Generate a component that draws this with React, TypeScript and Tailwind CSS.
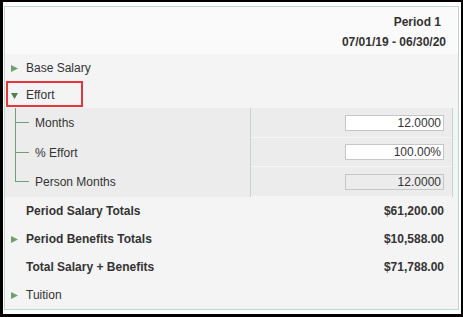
import { useState } from "react";

const font = { fontFamily: '"Liberation Sans", Arial, sans-serif' };

function Arrow({ open, dark }: { open?: boolean; dark?: boolean }) {
  const color = dark ? "#4f7f4f" : "#6f9f6f";
  return (
    <svg width="7" height="7" viewBox="0 0 7 7" className="mr-[8px] shrink-0">
      {open ? (
        <polygon points="0,1 7,1 3.5,7" fill={color} />
      ) : (
        <polygon points="0,0 7,3.5 0,7" fill={color} />
      )}
    </svg>
  );
}

interface SubRow {
  label: string;
  value: string;
  disabled?: boolean;
  h: string;
}

const subRows: SubRow[] = [
  { label: "Months", value: "12.0000", h: "h-[30px]" },
  { label: "% Effort", value: "100.00%", h: "h-[29px]" },
  { label: "Person Months", value: "12.0000", disabled: true, h: "h-[30px]" },
];

export default function App() {
  const [values, setValues] = useState(subRows.map((r) => r.value));

  return (
    <div
      className="w-[463px] h-[317px] bg-white border-black border-t-2 border-l-[3px] border-r-2 border-b-[3px] pt-[4px] pl-[1px] pr-[2px] pb-[4px] text-[12px] text-[#333]"
      style={font}
    >
      <div className="relative h-full border border-[#bcd8cf] bg-[#f4f4f4] flex flex-col">
        {/* header */}
        <div className="h-[47px] bg-[#fafafa] flex flex-col items-end pt-[5px] pr-[12px] font-bold leading-[20px]">
          <div className="mr-[5px]">Period 1</div>
          <div>07/01/19 - 06/30/20</div>
        </div>

        <div className="h-[28px] flex items-center pl-[6px]">
          <Arrow />
          <span>Base Salary</span>
        </div>
        <div className="h-[26px] flex items-center pl-[6px]">
          <Arrow open dark />
          <span>Effort</span>
        </div>

        {/* effort details */}
        <div className="flex bg-[#ececec] mr-[5px]">
          <div className="w-[245px] flex flex-col">
            {subRows.map((r, i) => (
              <div key={r.label} className={`relative ${r.h} flex items-center pl-[30px]`}>
                <span className="absolute left-[10px] top-0 h-1/2 w-[14px] border-l border-b border-[#6f9f6f]" />
                {i < subRows.length - 1 && (
                  <span className="absolute left-[10px] top-1/2 bottom-0 border-l border-[#6f9f6f]" />
                )}
                <span>{r.label}</span>
              </div>
            ))}
          </div>
          <div className="flex-1 border-l border-r border-[#bcd8cf] flex flex-col">
            {subRows.map((r, i) => (
              <div
                key={r.label}
                className={`${r.h} flex items-center justify-end pr-[8px] border-b border-dotted border-white`}
              >
                <input
                  className={`w-[99px] h-[16px] border border-[#c6c6c6] text-right pr-[2px] text-[12px] text-[#333] outline-none ${
                    r.disabled ? "bg-[#ececec]" : "bg-white"
                  }`}
                  style={font}
                  value={values[i]}
                  readOnly={r.disabled}
                  onChange={(e) => setValues(values.map((v, j) => (j === i ? e.target.value : v)))}
                />
              </div>
            ))}
          </div>
        </div>

        <div className="h-[28px] flex items-center justify-between pl-[21px] pr-[14px] font-bold">
          <span>Period Salary Totals</span>
          <span>$61,200.00</span>
        </div>
        <div className="h-[28px] flex items-center pl-[6px] pr-[14px] font-bold">
          <Arrow />
          <span className="flex-1">Period Benefits Totals</span>
          <span>$10,588.00</span>
        </div>
        <div className="h-[28px] flex items-center justify-between pl-[21px] pr-[14px] font-bold">
          <span>Total Salary + Benefits</span>
          <span>$71,788.00</span>
        </div>
        <div className="h-[28px] flex items-center pl-[6px]">
          <Arrow />
          <span>Tuition</span>
        </div>

        {/* highlight box */}
        <div className="absolute left-[1px] top-[74px] w-[77px] h-[26px] border-2 border-[#e8353b]" />
      </div>
    </div>
  );
}
